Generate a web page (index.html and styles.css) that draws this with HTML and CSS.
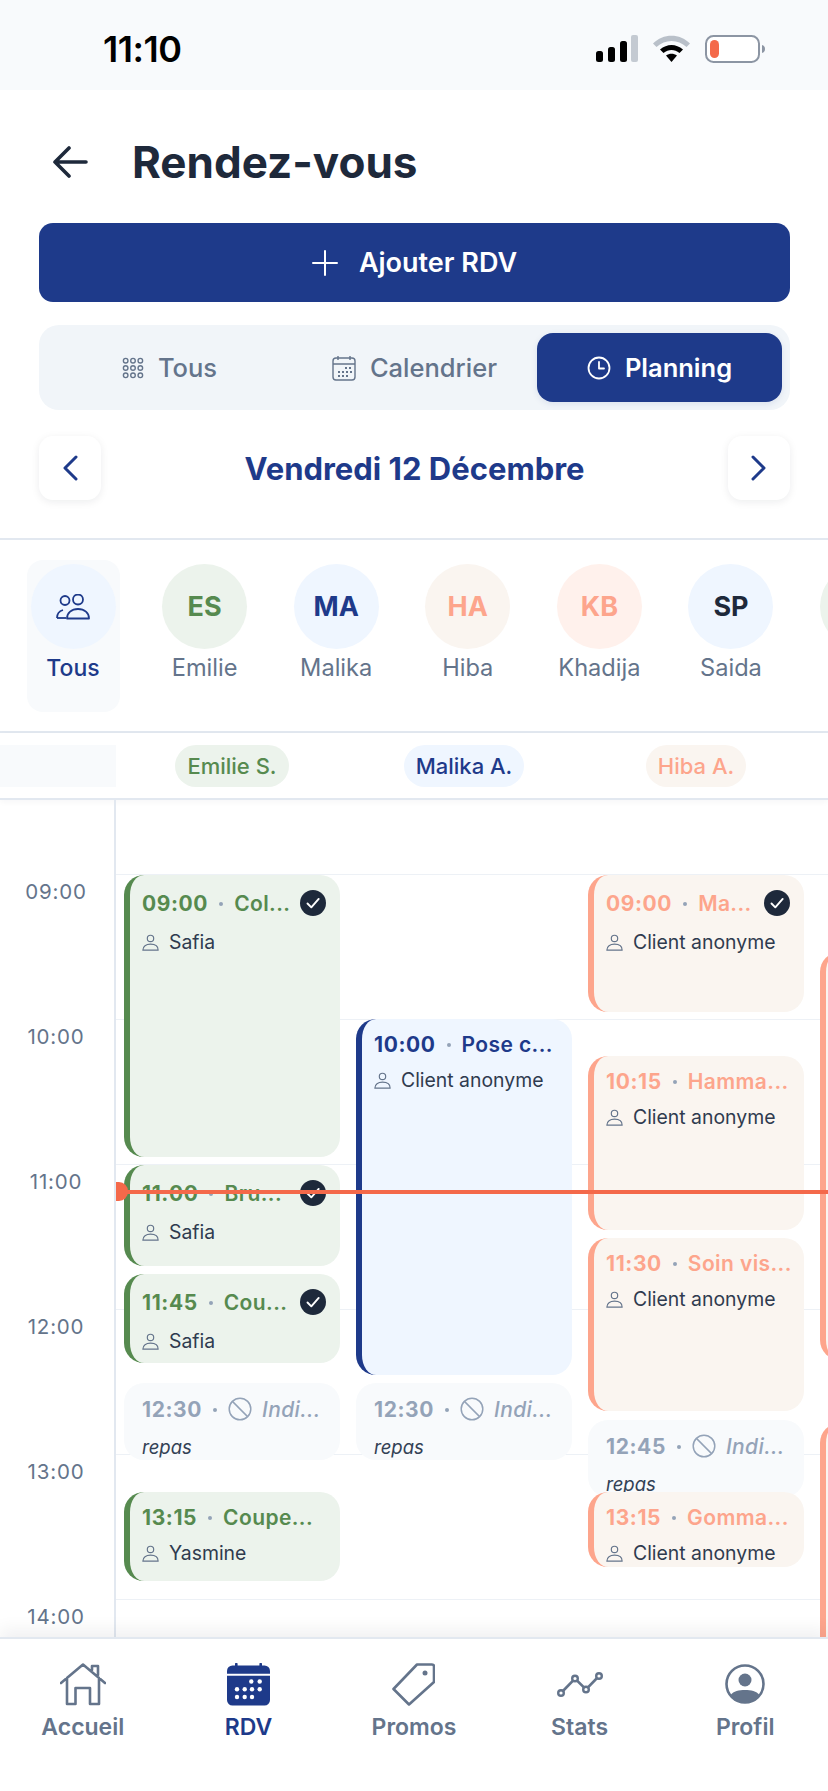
FILE: index.html
```html
<!DOCTYPE html>
<html lang="fr">
<head>
    <meta charset="UTF-8">
    <meta name="viewport" content="width=device-width, initial-scale=1.0">
    <title>Rendez-vous</title>
    <link rel="stylesheet" href="styles.css">
</head>
<body>
    <svg class="sprites" width="0" height="0">
        <symbol id="person" viewBox="0 0 16 16"><circle cx="8" cy="4.2" r="3" fill="none" stroke="currentColor" stroke-width="1.1"/><path d="M.8 15.2c0-3.6 3-5.6 7.2-5.6s7.2 2 7.2 5.6z" fill="none" stroke="currentColor" stroke-width="1.1" stroke-linejoin="round"/></symbol>
        <symbol id="check" viewBox="0 0 26 26"><circle cx="13" cy="13" r="13" fill="#1e293b"/><path d="M7.500 13.500l3.800 3.800 7.400-8.400" fill="none" stroke="#fff" stroke-width="1.900" stroke-linecap="round" stroke-linejoin="round"/></symbol>
        <symbol id="ban" viewBox="0 0 24 24"><circle cx="12" cy="12" r="10.800" fill="none" stroke="currentColor" stroke-width="1.500"/><path d="M4.400 4.400l15.200 15.200" stroke="currentColor" stroke-width="1.500"/></symbol>
    </svg>

    <div class="status-bar">
        <span class="clock">11:10</span>
        <div class="status-icons">
            <svg width="42" height="27" viewBox="0 0 42 27"><rect x="0" y="16" width="7" height="11" rx="2.500"/><rect x="12" y="12" width="7" height="15" rx="2.500"/><rect x="24" y="6" width="7" height="21" rx="2.500"/><rect x="35" y="0" width="7" height="27" rx="2" fill="#c4cad2"/></svg>
            <svg width="37" height="27" viewBox="0 0 37 27"><path d="M0 8.500C10-2 27-2 37 8.500l-3.500 3.500C25 4 12 4 3.500 12z" fill="#b9c0c9"/><path d="M7 14.500c7-6 16-6 23 0l-3.500 3.500c-5-4-11-4-16 0z"/><path d="M13 20.500c3.500-2.500 7.500-2.500 11 0L18.500 27z"/></svg>
            <svg width="60" height="28" viewBox="0 0 60 28"><rect x="1" y="1" width="53" height="26" rx="7.500" fill="#fff" stroke="#8c95a3" stroke-width="2"/><rect x="5" y="5" width="9" height="18" rx="4.500" fill="#f4694a"/><path d="M57 10c2 .5 3 2 3 4s-1 3.500-3 4z" fill="#8c95a3"/></svg>
        </div>
    </div>

    <header class="page-header">
        <svg class="back-icon" width="36" height="32" viewBox="0 0 36 32"><path d="M17 2L3 16l14 14M3 16h31" fill="none" stroke="#1e293b" stroke-width="3.600" stroke-linecap="round" stroke-linejoin="round"/></svg>
        <h1>Rendez-vous</h1>
    </header>

    <section class="controls">
        <button class="btn-add">
            <svg width="26" height="26" viewBox="0 0 26 26"><path d="M13 1v24M1 13h24" stroke="#fff" stroke-width="2" stroke-linecap="round"/></svg>
            Ajouter RDV
        </button>

        <div class="tabs">
            <div class="tab">
                <svg width="22" height="22" viewBox="0 0 24 24" fill="none" stroke="#64748b" stroke-width="1.500"><circle cx="4" cy="4" r="2.500"/><circle cx="12" cy="4" r="2.500"/><circle cx="20" cy="4" r="2.500"/><circle cx="4" cy="12" r="2.500"/><circle cx="12" cy="12" r="2.500"/><circle cx="20" cy="12" r="2.500"/><circle cx="4" cy="20" r="2.500"/><circle cx="12" cy="20" r="2.500"/><circle cx="20" cy="20" r="2.500"/></svg>
                Tous
            </div>
            <div class="tab">
                <svg width="24" height="26" viewBox="0 0 24 26" fill="none" stroke="#64748b" stroke-width="1.400"><rect x="1" y="3" width="22" height="22" rx="3"/><path d="M1 9h22M6 1v4M18 1v4"/><path d="M13 13h2M17 13h2M6 17h2M10 17h2M14 17h2M18 17h2M6 21h2M10 21h2M14 21h2" stroke-width="1.800"/></svg>
                Calendrier
            </div>
            <div class="tab tab-active">
                <svg width="24" height="24" viewBox="0 0 24 24" fill="none" stroke="#fff" stroke-width="1.800" stroke-linecap="round" stroke-linejoin="round"><circle cx="12" cy="12" r="10.500"/><path d="M12 6v6.500h5"/></svg>
                Planning
            </div>
        </div>

        <div class="date-nav">
            <div class="date-btn"><svg width="16" height="26" viewBox="0 0 16 26"><path d="M14 2L3 13l11 11" fill="none" stroke="#1e3a8a" stroke-width="3" stroke-linecap="round" stroke-linejoin="round"/></svg></div>
            <span class="date-label">Vendredi 12 Décembre</span>
            <div class="date-btn"><svg width="16" height="26" viewBox="0 0 16 26"><path d="M2 2l11 11L2 24" fill="none" stroke="#1e3a8a" stroke-width="3" stroke-linecap="round" stroke-linejoin="round"/></svg></div>
        </div>
    </section>

    <section class="staff-row">
        <div class="staff staff-selected">
            <div class="avatar av-blue">
                <svg width="34" height="26" viewBox="0 0 34 26" fill="none" stroke="#1e3a8a" stroke-width="1.800" stroke-linejoin="round"><circle cx="9" cy="6.500" r="4.500"/><circle cx="22" cy="5.500" r="5"/><path d="M1 24c0-4 2.500-7 6-8M11 24.500c0-5.500 4.500-9.500 11-9.500s11 4 11 9.500z"/><path d="M1 24h9"/></svg>
            </div>
            <span class="staff-name">Tous</span>
        </div>
        <div class="staff"><div class="avatar av-green">ES</div><span class="staff-name">Emilie</span></div>
        <div class="staff"><div class="avatar av-blue">MA</div><span class="staff-name">Malika</span></div>
        <div class="staff"><div class="avatar av-peach">HA</div><span class="staff-name">Hiba</span></div>
        <div class="staff"><div class="avatar av-rose">KB</div><span class="staff-name">Khadija</span></div>
        <div class="staff"><div class="avatar av-dark">SP</div><span class="staff-name">Saida</span></div>
        <div class="staff"><div class="avatar av-green"></div></div>
    </section>

    <section class="column-heads">
        <div class="corner"></div>
        <div class="head"><span class="pill pill-green">Emilie S.</span></div>
        <div class="head"><span class="pill pill-blue">Malika A.</span></div>
        <div class="head"><span class="pill pill-peach">Hiba A.</span></div>
    </section>

    <section class="schedule">
        <div class="hours">
            <span class="hour">09:00</span>
            <span class="hour">10:00</span>
            <span class="hour">11:00</span>
            <span class="hour">12:00</span>
            <span class="hour">13:00</span>
            <span class="hour">14:00</span>
        </div>
        <div class="grid">
            <div class="line"></div><div class="line"></div><div class="line"></div><div class="line"></div><div class="line"></div><div class="line"></div>

            <div class="event green" style="left:8px;top:1px;height:282px">
                <div class="ev-top"><b>09:00</b><i class="dot"></i><span class="ev-title">Col...</span><svg class="ev-check"><use href="#check"/></svg></div>
                <div class="ev-client"><svg><use href="#person"/></svg>Safia</div>
            </div>
            <div class="event green" style="left:8px;top:291px;height:101px">
                <div class="ev-top"><b>11:00</b><i class="dot"></i><span class="ev-title">Bru...</span><svg class="ev-check"><use href="#check"/></svg></div>
                <div class="ev-client"><svg><use href="#person"/></svg>Safia</div>
            </div>
            <div class="event green" style="left:8px;top:400px;height:89px">
                <div class="ev-top"><b>11:45</b><i class="dot"></i><span class="ev-title">Cou...</span><svg class="ev-check"><use href="#check"/></svg></div>
                <div class="ev-client"><svg><use href="#person"/></svg>Safia</div>
            </div>
            <div class="event off" style="left:8px;top:509px;height:77px">
                <div class="ev-top"><b>12:30</b><i class="dot"></i><svg class="ev-ban"><use href="#ban"/></svg><em class="ev-title">Indi...</em></div>
                <div class="ev-note">repas</div>
            </div>
            <div class="event green" style="left:8px;top:618px;height:89px">
                <div class="ev-top"><b>13:15</b><i class="dot"></i><span class="ev-title">Coupe...</span></div>
                <div class="ev-client"><svg><use href="#person"/></svg>Yasmine</div>
            </div>

            <div class="event blue" style="left:240px;top:145px;height:356px">
                <div class="ev-top"><b>10:00</b><i class="dot"></i><span class="ev-title">Pose c...</span></div>
                <div class="ev-client"><svg><use href="#person"/></svg>Client anonyme</div>
            </div>
            <div class="event off" style="left:240px;top:509px;height:77px">
                <div class="ev-top"><b>12:30</b><i class="dot"></i><svg class="ev-ban"><use href="#ban"/></svg><em class="ev-title">Indi...</em></div>
                <div class="ev-note">repas</div>
            </div>

            <div class="event peach" style="left:472px;top:1px;height:137px">
                <div class="ev-top"><b>09:00</b><i class="dot"></i><span class="ev-title">Ma...</span><svg class="ev-check"><use href="#check"/></svg></div>
                <div class="ev-client"><svg><use href="#person"/></svg>Client anonyme</div>
            </div>
            <div class="event peach" style="left:472px;top:182px;height:174px">
                <div class="ev-top"><b>10:15</b><i class="dot"></i><span class="ev-title">Hamma...</span></div>
                <div class="ev-client"><svg><use href="#person"/></svg>Client anonyme</div>
            </div>
            <div class="event peach" style="left:472px;top:364px;height:173px">
                <div class="ev-top"><b>11:30</b><i class="dot"></i><span class="ev-title">Soin vis...</span></div>
                <div class="ev-client"><svg><use href="#person"/></svg>Client anonyme</div>
            </div>
            <div class="event off" style="left:472px;top:546px;height:77px">
                <div class="ev-top"><b>12:45</b><i class="dot"></i><svg class="ev-ban"><use href="#ban"/></svg><em class="ev-title">Indi...</em></div>
                <div class="ev-note">repas</div>
            </div>
            <div class="event peach" style="left:472px;top:618px;height:75px">
                <div class="ev-top"><b>13:15</b><i class="dot"></i><span class="ev-title">Gomma...</span></div>
                <div class="ev-client"><svg><use href="#person"/></svg>Client anonyme</div>
            </div>

            <div class="event peach" style="left:704px;top:78px;height:408px"></div>
            <div class="event peach" style="left:704px;top:549px;height:300px"></div>

            <div class="now-line"></div>
        </div>
    </section>

    <nav class="tabbar">
        <div class="nav-item">
            <svg width="46" height="43" viewBox="0 0 46 43" fill="none" stroke="#64748b" stroke-width="2.600" stroke-linejoin="round" stroke-linecap="round"><path d="M1 20L23 1.500 45 20M7 15v26h8.500V25H30v16h9V15M32 7V3h6v9"/></svg>
            <span>Accueil</span>
        </div>
        <div class="nav-item nav-active">
            <svg width="43" height="43" viewBox="0 0 43 43"><path d="M0 8a5.500 5.500 0 0 1 5.500-5.500H8V1a1.300 1.300 0 0 1 2.600 0v1.500h21.800V1A1.300 1.300 0 0 1 35 1v1.500h2.500A5.500 5.500 0 0 1 43 8v2.700H0z" fill="#1e3a8a"/><path d="M0 12.700h43V37a5.500 5.500 0 0 1-5.500 5.500h-32A5.500 5.500 0 0 1 0 37z" fill="#1e3a8a"/><g fill="#fff"><circle cx="24.300" cy="18.500" r="2.200"/><circle cx="32.700" cy="18.500" r="2.200"/><circle cx="10" cy="26.200" r="2.200"/><circle cx="17.700" cy="26.200" r="2.200"/><circle cx="25" cy="26.200" r="2.200"/><circle cx="32.700" cy="26.200" r="2.200"/><circle cx="10" cy="34" r="2.200"/><circle cx="17.700" cy="34" r="2.200"/><circle cx="25" cy="34" r="2.200"/></g></svg>
            <span>RDV</span>
        </div>
        <div class="nav-item">
            <svg width="43" height="43" viewBox="0 0 43 43" fill="none" stroke="#64748b" stroke-width="2.600" stroke-linejoin="round"><path d="M25 1.500h15a2 2 0 0 1 2 2V19L17 41.500 1.500 26z"/><circle cx="33" cy="10" r="2.500" fill="#64748b" stroke="none"/></svg>
            <span>Promos</span>
        </div>
        <div class="nav-item">
            <svg width="46" height="43" viewBox="0 0 46 43" fill="none" stroke="#64748b" stroke-width="2.600"><path d="M4 30l14-14.500 11 11L42 13"/><g fill="#fff" stroke-width="2.400"><circle cx="4" cy="30" r="2.800"/><circle cx="18" cy="15.500" r="2.800"/><circle cx="29" cy="26.500" r="2.800"/><circle cx="42" cy="13" r="2.800"/></g></svg>
            <span>Stats</span>
        </div>
        <div class="nav-item">
            <svg width="40" height="43" viewBox="0 0 40 43" fill="none"><circle cx="20" cy="21" r="18.500" stroke="#64748b" stroke-width="2.600"/><circle cx="20" cy="17" r="6.500" fill="#64748b"/><path d="M5.500 32c3-4 8.500-5 14.500-5s11.500 1 14.500 5c-3.500 4.500-8.500 7-14.500 7s-11-2.500-14.500-7z" fill="#64748b"/></svg>
            <span>Profil</span>
        </div>
    </nav>
</body>
</html>
```

FILE: styles.css
```css
* {
    box-sizing: border-box;
}

html, body {
    margin: 0;
    padding: 0;
}

body {
    width: 828px;
    height: 1791px;
    overflow: hidden;
    display: flex;
    flex-direction: column;
    font-family: Inter, "Liberation Sans", sans-serif;
    color: #1e293b;
    background-color: #fff;
}

.sprites {
    position: absolute;
}

/* status bar */
.status-bar {
    flex: none;
    height: 90px;
    display: flex;
    align-items: center;
    justify-content: space-between;
    padding: 7px 63px 0 103px;
    background-color: #f8fafc;
}

.clock {
    font-size: 36px;
    font-weight: 600;
    letter-spacing: -0.5px;
    color: #000;
}

.status-icons {
    display: flex;
    align-items: center;
    gap: 15px;
}

/* title */
.page-header {
    flex: none;
    height: 133px;
    display: flex;
    align-items: center;
    gap: 44px;
    padding: 10px 0 0 52px;
}

.page-header h1 {
    margin: 0;
    font-size: 44px;
    font-weight: 700;
}

/* add button, view tabs, date */
.controls {
    flex: none;
    height: 317px;
    padding: 0 38px 0 39px;
    border-bottom: 2px solid #e2e8f0;
}

.btn-add {
    width: 100%;
    height: 79px;
    display: flex;
    align-items: center;
    justify-content: center;
    gap: 21px;
    border: none;
    border-radius: 14px;
    background-color: #1e3a8a;
    color: #fff;
    font-family: inherit;
    font-size: 27px;
    font-weight: 600;
}

.tabs {
    height: 85px;
    margin-top: 23px;
    padding: 8px;
    display: grid;
    grid-template-columns: repeat(3, 1fr);
    align-items: stretch;
    border-radius: 20px;
    background-color: #f1f5f9;
}

.tab {
    display: flex;
    align-items: center;
    justify-content: center;
    gap: 14px;
    font-size: 25.500px;
    font-weight: 500;
    color: #64748b;
    border-radius: 16px;
}

.tab-active {
    background-color: #1e3a8a;
    color: #fff;
    font-weight: 600;
    box-shadow: 0 2px 6px rgba(30, 58, 138, 0.1);
}

.date-nav {
    display: flex;
    align-items: center;
    justify-content: space-between;
    margin-top: 26px;
}

.date-btn {
    width: 62px;
    height: 64px;
    display: flex;
    align-items: center;
    justify-content: center;
    border-radius: 14px;
    background-color: #fff;
    box-shadow: 0 2px 8px rgba(15, 23, 42, 0.08);
}

.date-label {
    font-size: 31px;
    font-weight: 700;
    color: #1e3a8a;
}

/* staff filter */
.staff-row {
    flex: none;
    height: 193px;
    display: flex;
    gap: 38.600px;
    padding: 20px 0 0 26.500px;
    border-bottom: 2px solid #e2e8f0;
    overflow: hidden;
}

.staff {
    flex: none;
    width: 93px;
    height: 152px;
    padding-top: 4px;
    display: flex;
    flex-direction: column;
    align-items: center;
    border-radius: 16px;
}

.staff-selected {
    background-color: #f8fafc;
}

.avatar {
    flex: none;
    width: 85px;
    height: 85px;
    display: flex;
    align-items: center;
    justify-content: center;
    border-radius: 50%;
    font-size: 27px;
    font-weight: 700;
}

.av-blue { background-color: #eff6ff; color: #1e3a8a; }
.av-green { background-color: #ecf3ec; color: #568a4f; }
.av-peach { background-color: #faf5f0; color: #fda58c; }
.av-rose { background-color: #fff1ec; color: #fda58c; }
.av-dark { background-color: #eff6ff; color: #1e293b; }

.staff-name {
    margin-top: 3px;
    font-size: 23.600px;
    line-height: 32px;
    color: #64748b;
    white-space: nowrap;
}

.staff-selected .staff-name {
    font-size: 23px;
    color: #1e3a8a;
    font-weight: 500;
}

/* column heads */
.column-heads {
    flex: none;
    height: 67px;
    display: grid;
    grid-template-columns: 116px 232px 232px 232px;
    padding-top: 12px;
    border-bottom: 2px solid #e2e8f0;
    box-shadow: 0 2px 6px rgba(15, 23, 42, 0.04);
}

.corner {
    height: 42px;
    background-color: #f8fafc;
}

.head {
    display: flex;
    justify-content: center;
}

.pill {
    height: 42px;
    padding: 0 12px;
    display: flex;
    align-items: center;
    border-radius: 21px;
    font-size: 22px;
    font-weight: 500;
}

.pill-green { background-color: #ecf3ec; color: #568a4f; }
.pill-blue { background-color: #eff6ff; color: #1e3a8a; }
.pill-peach { background-color: #faf5f0; color: #fda58c; }

/* schedule */
.schedule {
    flex: 1;
    min-height: 0;
    display: flex;
    padding-top: 74px;
    overflow: hidden;
}

.hours {
    flex: none;
    width: 116px;
    margin-top: -74px;
    padding-top: 74px;
    border-right: 2px solid #e2e8f0;
}

.hour {
    display: block;
    height: 145px;
    padding-top: 4px;
    width: 112px;
    text-align: center;
    font-size: 20.500px;
    line-height: 28px;
    letter-spacing: 0.8px;
    color: #64748b;
}

.grid {
    position: relative;
    flex: 1;
}

.line {
    height: 145px;
    border-top: 1px solid #edf1f6;
}

.event {
    position: absolute;
    width: 216px;
    padding: 11px 14px 0 12px;
    border-left: 6px solid;
    border-radius: 20px;
    overflow: hidden;
}

.event.green { background-color: #ecf3ec; border-color: #568a4f; color: #568a4f; }
.event.blue { background-color: #eff6ff; border-color: #1e3a8a; color: #1e3a8a; }
.event.peach { background-color: #faf5f0; border-color: #fda58c; color: #fda58c; }
.event.off { background-color: #f8fafc; border-color: #f8fafc; color: #94a3b8; padding-top: 12px; }

.ev-top {
    min-height: 28px;
    display: flex;
    align-items: center;
    font-size: 21px;
    white-space: nowrap;
}

.ev-top b {
    font-weight: 700;
    letter-spacing: 0.6px;
}

.ev-title {
    font-weight: 600;
    letter-spacing: 0.4px;
}

em.ev-title {
    font-weight: 500;
    font-style: italic;
}

.dot {
    flex: none;
    width: 4px;
    height: 4px;
    margin: 2px 11px 0 11px;
    border-radius: 50%;
    background-color: #94a3b8;
}

.ev-check {
    flex: none;
    width: 26px;
    height: 26px;
    margin: 4px 0 4px auto;
}

.ev-ban {
    flex: none;
    width: 24px;
    height: 24px;
    margin-right: 10px;
    color: #94a3b8;
}

.ev-client {
    margin-top: 8px;
    display: flex;
    align-items: center;
    gap: 10px;
    font-size: 19.400px;
    line-height: 28px;
    color: #2f3b4f;
    white-space: nowrap;
}

.ev-client svg {
    width: 17px;
    height: 17px;
    color: #64748b;
}

.ev-note {
    margin-top: 11px;
    font-size: 18.500px;
    line-height: 26px;
    font-style: italic;
    color: #334155;
}

.now-line {
    position: absolute;
    left: 0;
    right: 0;
    top: 316px;
    height: 4px;
    background-color: #f4694a;
}

.now-line::before {
    content: "";
    position: absolute;
    left: 0;
    top: -8px;
    width: 12px;
    height: 19px;
    border-radius: 0 9px 9px 0;
    background-color: #f4694a;
}

/* bottom nav */
.tabbar {
    flex: none;
    height: 154px;
    display: grid;
    grid-template-columns: repeat(5, 1fr);
    background-color: #fff;
    border-top: 2px solid #e2e8f0;
    box-shadow: 0 -8px 16px rgba(15, 23, 42, 0.06);
    position: relative;
}

.nav-item {
    display: flex;
    flex-direction: column;
    align-items: center;
    padding-top: 24px;
    gap: 7px;
    font-size: 23px;
    line-height: 28px;
    font-weight: 600;
    color: #64748b;
}

.nav-active {
    color: #1e3a8a;
}
```
